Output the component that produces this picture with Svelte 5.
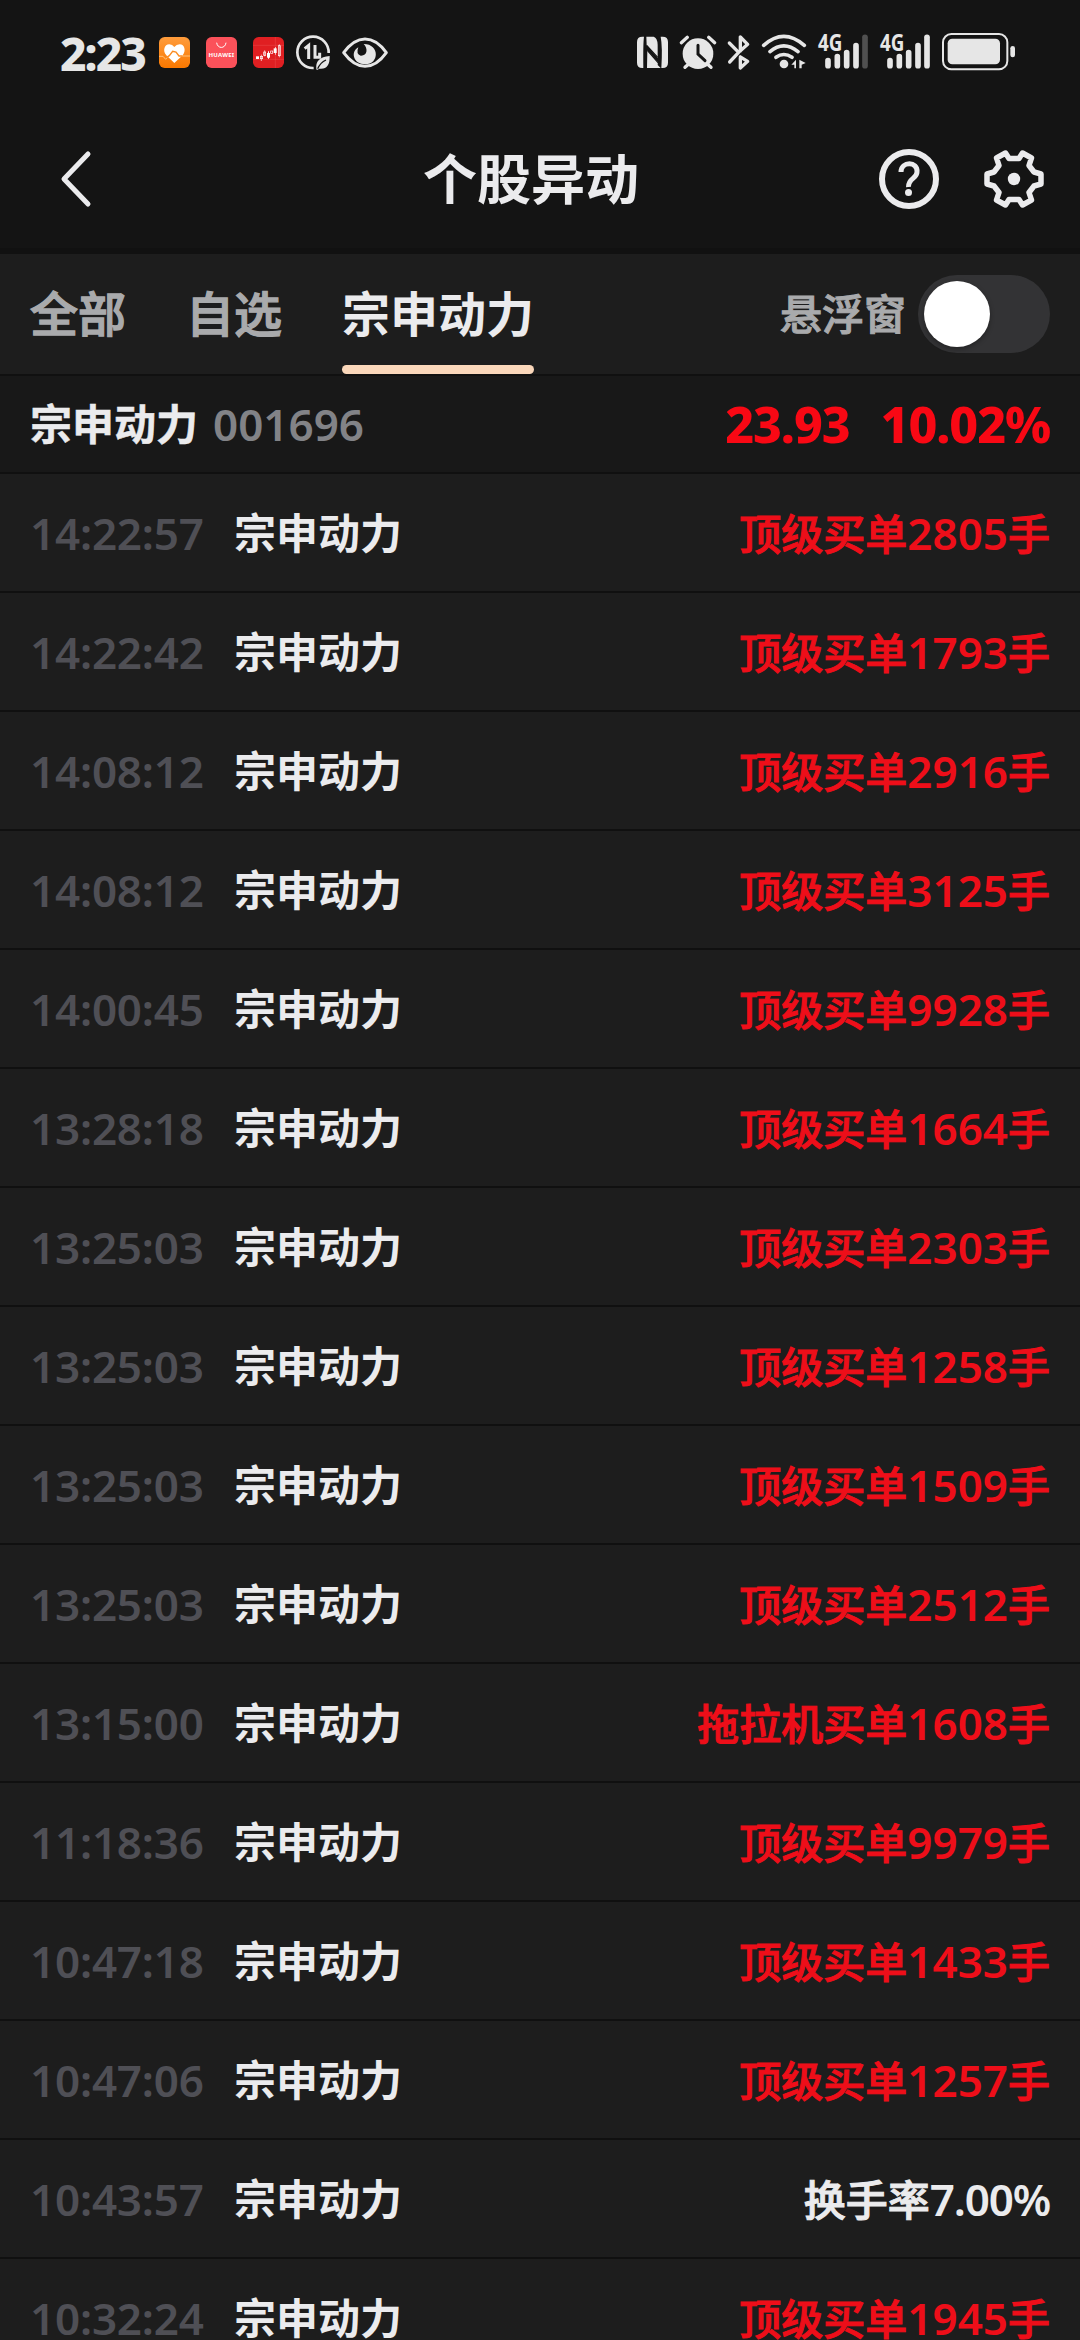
<script>
  const stock = '宗申动力';
  const big = '顶级买单';
  const rows = [
    ['14:22:57', big, '2805', '手'],
    ['14:22:42', big, '1793', '手'],
    ['14:08:12', big, '2916', '手'],
    ['14:08:12', big, '3125', '手'],
    ['14:00:45', big, '9928', '手'],
    ['13:28:18', big, '1664', '手'],
    ['13:25:03', big, '2303', '手'],
    ['13:25:03', big, '1258', '手'],
    ['13:25:03', big, '1509', '手'],
    ['13:25:03', big, '2512', '手'],
    ['13:15:00', '拖拉机买单', '1608', '手'],
    ['11:18:36', big, '9979', '手'],
    ['10:47:18', big, '1433', '手'],
    ['10:47:06', big, '1257', '手'],
    ['10:43:57', '换手率', '7.00%', ''],
    ['10:32:24', big, '1945', '手']
  ];
  const tabs = ['全部', '自选', stock];
  let active = $state(2);
  let floating = $state(false);
</script>

<div class="screen">
  <div class="status">
    <span class="clock">2:23</span>
    <svg class="app first" width="31" height="31" viewBox="0 0 93 93">
      <defs><linearGradient id="orange" x2="0" y2="1"><stop stop-color="#ff9c3c" /><stop offset="1" stop-color="#f97800" /></linearGradient></defs>
      <rect width="93" height="93" rx="17" fill="url(#orange)" />
      <path d="M0 58H12L20 67L30 56M66 57H93" fill="none" stroke="#ffc079" stroke-width="3" />
      <path d="M46 78L22 55C10 42 16 22 31 22Q40 22 46 30Q52 22 62 22C77 22 82 42 71 55Z" fill="#fff" />
      <path d="M22 62L31 56L41 43L51 45L60 57L70 57" fill="none" stroke="#fb8b20" stroke-width="4" />
    </svg>
    <svg class="app" width="31" height="31" viewBox="0 0 93 93">
      <rect width="93" height="93" rx="17" fill="#fb515a" />
      <path d="M32 17C34 36 58 36 60 17" fill="none" stroke="#fff" stroke-width="3" />
      <text x="46" y="60" text-anchor="middle" textLength="77" font-size="18" font-weight="700" fill="#fff">HUAWEI</text>
    </svg>
    <svg class="app" width="31" height="31" viewBox="0 0 93 93">
      <rect width="93" height="93" rx="17" fill="#e01f22" />
      <path d="M67 0V93M0 25H93M0 67H93" stroke="#ef6260" stroke-width="1" />
      <g fill="#fff"><rect x="9" y="58" width="9" height="8" /><rect x="42" y="48" width="9" height="14" /><rect x="62" y="34" width="9" height="14" /><path d="M45 43h3v22h-3zM66 30h2v23h-2z" /></g>
      <g fill="none" stroke="#fff" stroke-width="2"><rect x="22" y="58" width="7" height="7" /><rect x="32" y="45" width="6" height="10" /><rect x="53" y="42" width="6" height="7" /><rect x="76" y="26" width="6" height="30" /><path d="M25 53V72M35 40V58M79 22V61" /></g>
    </svg>
    <svg class="data" width="34" height="39" viewBox="768 39 102 117">
      <path d="M866 99A47 47 0 1 0 821 144" fill="none" stroke="#e6e6e6" stroke-width="8" />
      <path d="M794 86L806 76V117M825 75V112H839V98" fill="none" stroke="#e6e6e6" stroke-width="9" />
      <path d="M829 148Q824 112 869 108Q870 150 838 146L831 150Z" fill="#e6e6e6" />
      <path d="M833 146Q841 128 858 120" fill="none" stroke="#141414" stroke-width="4" />
    </svg>
    <svg class="eye" width="46" height="39" viewBox="906 39 138 117">
      <path d="M911 98Q941 57 975 57Q1010 57 1039 98Q1010 139 975 139Q941 139 911 98Z" fill="none" stroke="#e6e6e6" stroke-width="9" stroke-linejoin="round" />
      <path d="M971 72C1020 72 1018 133 976 133C939 133 931 95 955 82Q947 102 962 107C982 108 985 86 971 72Z" fill="#e6e6e6" />
    </svg>

    <span class="spacer"></span>

    <svg width="31" height="39" viewBox="51 39 93 117">
      <path d="M67 50H72Q69 70 70 144H67Q51 144 51 128V66Q51 50 67 50ZM79 50H101Q112 53 113 74V114L80 76ZM122 50H128Q144 50 144 66V128Q144 144 128 144H124Q128 80 122 50ZM82 91L114 126L113 135L122 144H81Z" fill="#e6e6e6" />
      <path d="M82 91L122 137M80 76L113 112" stroke="#141414" stroke-width="4" />
    </svg>
    <svg class="alarm" width="36" height="39" viewBox="180 39 108 117">
      <circle cx="234" cy="101" r="46" fill="#e6e6e6" />
      <path d="M184 68L202 52M266 52L284 68M195 142L206 132M273 142L262 132" stroke="#e6e6e6" stroke-width="10" stroke-linecap="round" />
      <path d="M234 76V102L255 122" fill="none" stroke="#141414" stroke-width="9" stroke-linecap="round" />
    </svg>
    <svg class="bt" width="22" height="39" viewBox="325 39 66 117">
      <path d="M329 69L357 97L330 126M357 97L384 73L362 51V93M362 111L384 124L362 144V111" fill="none" stroke="#e6e6e6" stroke-width="10" stroke-linecap="round" stroke-linejoin="round" />
    </svg>
    <svg class="wifi" width="44" height="39" viewBox="426 39 132 117">
      <path d="M431 76Q491 22 553 76M450 95Q491 60 534 95M468 112Q491 95 516 112" fill="none" stroke="#e6e6e6" stroke-width="11" stroke-linecap="round" />
      <circle cx="492" cy="132" r="13" fill="#e6e6e6" />
      <path d="M514 134L528 119V145H523V134ZM538 119L557 129L545 134V145H538Z" fill="#e6e6e6" />
    </svg>
    {#each [false, true] as full}
      <svg class="signal" width="51" height="39" viewBox="594 39 153 117">
        <text x="594" y="94" textLength="73" lengthAdjust="spacingAndGlyphs" font-size="67" font-weight="700" fill="#e6e6e6">4G</text>
        <g stroke="#e6e6e6" stroke-width="17" stroke-linecap="round">
          <path d="M624 122V137M652 110V137M680 98V137M708 77V137" />
          <path d="M735 52V137" class:dim={!full} />
        </g>
      </svg>
    {/each}
    <svg class="battery" width="73" height="39" viewBox="966 39 219 117">
      <rect x="969" y="42" width="193" height="106" rx="25" fill="none" stroke="#e6e6e6" stroke-width="6" />
      <rect x="983" y="56" width="157" height="77" rx="14" fill="#e6e6e6" />
      <rect x="1171" y="78" width="14" height="34" rx="7" fill="#e6e6e6" />
    </svg>
  </div>

  <header>
    <button class="back" aria-label="返回">
      <svg width="32" height="60" viewBox="0 0 32 60"><path d="M28 5L4 30L28 55" fill="none" stroke="#ebebed" stroke-width="5" stroke-linecap="round" stroke-linejoin="round" /></svg>
    </button>
    <h1>个股异动</h1>
    <div class="tools">
      <svg width="60" height="60" viewBox="0 0 60 60">
        <circle cx="30" cy="30" r="27" fill="none" stroke="#ebebed" stroke-width="6" />
        <path d="M22 23C22 12 39 12 38 23C38 30 29 29 29.500 38" fill="none" stroke="#ebebed" stroke-width="5" />
        <circle cx="29.500" cy="43.500" r="3.500" fill="#ebebed" />
      </svg>
      <svg width="62" height="60" viewBox="0 0 62 60">
        <path d="M22.500 4L13.500 9L16 16.500L11 23L4 25V35L11 37L16 43.500L13.500 51L22.500 56L26 50.500H36L39.500 56L48.500 51L46 43.500L51 37L58 35V25L51 23L46 16.500L48.500 9L39.500 4L36 9.500H26Z" fill="none" stroke="#ebebed" stroke-width="5.500" stroke-linejoin="round" />
        <circle cx="31" cy="30" r="6.200" fill="#ebebed" />
      </svg>
    </div>
  </header>

  <nav>
    {#each tabs as tab, i}
      <button class="tab" class:active={active === i} onclick={() => (active = i)}>{tab}</button>
    {/each}
    <span class="spacer"></span>
    <span class="label">悬浮窗</span>
    <button class="toggle" class:on={floating} aria-label="悬浮窗" onclick={() => (floating = !floating)}><span class="knob"></span></button>
  </nav>

  <section class="summary">
    <strong>{stock}</strong>
    <span class="code num">001696</span>
    <span class="spacer"></span>
    <span class="quote price">23.93</span>
    <span class="quote">10.02%</span>
  </section>

  <ul>
    {#each rows as [time, label, amount, unit]}
      <li>
        <time class="num">{time}</time>
        <span class="name">{stock}</span>
        <span class="event" class:plain={!unit}>{label}<span class="num">{amount}</span>{unit}</span>
      </li>
    {/each}
  </ul>
</div>

<style>
  :global(body) { background: #1d1d1d; overflow: hidden; }
  .screen {
    width: 1080px; height: 2340px; overflow: hidden;
    display: flex; flex-direction: column;
    background: #1d1d1d; color: #ebebed;
    font-family: "Noto Sans", "Noto Sans CJK SC", sans-serif;
  }
  svg { display: block; flex: none; overflow: visible; }
  button { border: 0; padding: 0; background: none; color: inherit; font: inherit; }
  .spacer { flex: 1; }
  .num { font-family: "Noto Sans", sans-serif; font-size: 44px; font-weight: 600; line-height: 1; -webkit-text-stroke: 0; }

  .status {
    box-sizing: border-box; height: 110px; flex: none;
    display: flex; align-items: center;
    padding: 0 65px 5px 60px; background: #141414;
  }
  .clock { width: 99px; font-size: 46px; font-weight: 800; line-height: 1; color: #e6e6e6; letter-spacing: -2px; white-space: nowrap; }
  .app { margin-left: 16px; }
  .app.first { margin-left: 0; }
  .data { margin-left: 12px; }
  .eye { margin-left: 12px; }
  .alarm { margin-left: 12px; }
  .bt { margin-left: 12px; }
  .wifi { margin-left: 12px; }
  .signal { margin-left: 12px; margin-right: -1px; }
  .battery { margin-left: 12px; }
  .dim { stroke: #505050; }

  header {
    box-sizing: border-box; height: 144px; flex: none;
    display: grid; grid-template-columns: 1fr auto 1fr; align-items: center;
    padding: 0 35px 0 60px; background: #141414; border-bottom: 6px solid #111;
  }
  h1 { margin: 0; padding-right: 43px; font-size: 54px; font-weight: 600; line-height: 1; }
  .tools { justify-self: end; display: flex; gap: 44px; }

  nav {
    box-sizing: border-box; height: 122px; flex: none;
    display: flex; align-items: center;
    padding: 0 30px; border-bottom: 2px solid #101010;
  }
  .tab {
    box-sizing: border-box; height: 120px; margin-right: 60px;
    display: flex; align-items: center; position: relative;
    font-size: 48px; font-weight: 500; line-height: 1; color: #a9aaac; white-space: nowrap;
    -webkit-text-stroke: 1.3px;
  }
  .tab.active { color: #ebebed; font-weight: 700; margin-right: 0; -webkit-text-stroke: 0; }
  .tab.active::after { content: ""; position: absolute; left: 0; right: 0; bottom: 0; height: 9px; border-radius: 5px; background: #fad7ba; }
  .label { font-size: 42px; font-weight: 500; line-height: 1; color: #a9aaac; margin-right: 12px; -webkit-text-stroke: 1px; }
  .toggle { width: 132px; height: 78px; padding: 6px; border-radius: 39px; background: #333335; display: flex; }
  .toggle.on { justify-content: flex-end; background: #fad7ba; }
  .knob { width: 66px; height: 66px; border-radius: 50%; background: #fff; box-shadow: 0 2px 5px #0005; }

  .summary {
    box-sizing: border-box; height: 98px; flex: none;
    display: flex; align-items: center;
    padding: 0 30px; background: #181818; border-bottom: 2px solid #101010;
  }
  strong { font-size: 42px; font-weight: 700; line-height: 1; -webkit-text-stroke: 0.5px; }
  .code { margin-left: 15px; color: #828387; }
  .quote { font-size: 50px; font-weight: 800; line-height: 1; color: #f90814; letter-spacing: -1.1px; }
  .price { margin-right: 31px; }

  ul { list-style: none; margin: 0; padding: 0; }
  li {
    box-sizing: border-box; height: 119px;
    display: flex; align-items: center;
    padding: 0 30px; border-bottom: 2px solid #101010;
    font-size: 42px; line-height: 1;
  }
  time { width: 204px; color: #4f4f55; letter-spacing: -0.2px; }
  .name { font-weight: 600; }
  .event { margin-left: auto; font-weight: 500; color: #ee0e19; white-space: nowrap; -webkit-text-stroke: 1px; }
  .plain { color: #ebebed; }
  .plain .num { letter-spacing: -1.2px; }
</style>
